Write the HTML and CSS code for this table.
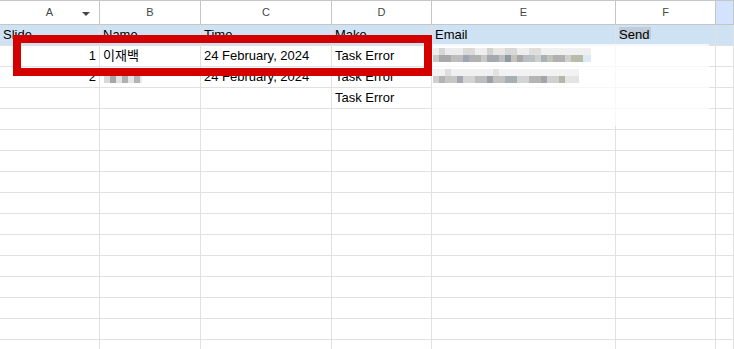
FILE: index.html
```html
<!DOCTYPE html>
<html lang="ko">
<head>
  <meta charset="UTF-8">
  <title>Slides sheet</title>
  <link rel="stylesheet" href="styles.css">
</head>
<body>

<div class="sheet">
  <!-- column letters -->
  <div class="row col-head">
    <div class="cell">A<span class="filter"></span></div>
    <div class="cell">B</div>
    <div class="cell">C</div>
    <div class="cell">D</div>
    <div class="cell">E</div>
    <div class="cell">F</div>
    <div class="cell sel"></div>
  </div>

  <!-- header row -->
  <div class="row title-row">
    <div class="cell"><span class="clip">Slide</span></div>
    <div class="cell"><span class="clip">Name</span></div>
    <div class="cell"><span class="clip">Time</span></div>
    <div class="cell"><span class="clip">Make</span></div>
    <div class="cell"><span class="clip">Email</span></div>
    <div class="cell"><span class="clip"><span class="hl">Send</span></span></div>
    <div class="cell"></div>
  </div>

  <div class="row">
    <div class="cell num">1</div>
    <div class="cell">이재백</div>
    <div class="cell">24 February, 2024</div>
    <div class="cell">Task Error</div>
    <div class="cell"></div>
    <div class="cell"></div>
    <div class="cell"></div>
  </div>
  <div class="row">
    <div class="cell num">2</div>
    <div class="cell"></div>
    <div class="cell">24 February, 2024</div>
    <div class="cell">Task Error</div>
    <div class="cell"></div>
    <div class="cell"></div>
    <div class="cell"></div>
  </div>
  <div class="row">
    <div class="cell"></div>
    <div class="cell"></div>
    <div class="cell"></div>
    <div class="cell">Task Error</div>
    <div class="cell"></div>
    <div class="cell"></div>
    <div class="cell"></div>
  </div>
  <div id="emptyRows"></div>

  <!-- hidden personal data -->
  <div class="haze"></div>
  <div class="mask mask-mail1"></div>
  <div class="mask mask-mail2"></div>
  <div class="mask mask-name"></div>

  <div class="marker"></div>
</div>

<script>
  // pad the sheet with blank rows
  const holder = document.getElementById('emptyRows');
  for (let i = 0; i < 12; i++) {
    const row = document.createElement('div');
    row.className = 'row';
    for (let c = 0; c < 7; c++) {
      const cell = document.createElement('div');
      cell.className = 'cell';
      row.appendChild(cell);
    }
    holder.appendChild(row);
  }
</script>

</body>
</html>
```

FILE: styles.css
```css
body {
  margin: 0;
  background: #fff;
  font-family: "Liberation Sans", Arial, "Noto Sans CJK KR", sans-serif;
  font-size: 13px;
  color: #000;
  overflow: hidden;
}
.sheet {
  position: relative;
  width: 734px;
}
.row {
  display: grid;
  grid-template-columns: 100px 101px 131px 100px 184px 100px 1fr;
  height: 21px;
}
.cell {
  box-sizing: border-box;
  border-right: 1px solid #e1e1e1;
  border-bottom: 1px solid #e1e1e1;
  padding: 0 3px;
  line-height: 20px;
  white-space: nowrap;
  overflow: hidden;
}
.num {
  text-align: right;
}

/* column letters */
.col-head {
  height: 25px;
}
.col-head .cell {
  position: relative;
  border-top: 1px solid #c4c7c5;
  border-right-color: #c4c7c5;
  border-bottom-color: #c4c7c5;
  text-align: center;
  font-size: 11px;
  line-height: 23px;
  color: #444746;
}
.col-head .sel {
  background: #d3e3fd;
}
.filter {
  position: absolute;
  left: 82px;
  top: 11px;
  border-left: 4px solid transparent;
  border-right: 4px solid transparent;
  border-top: 4px solid #444746;
}

/* first row of the table */
.title-row .cell {
  background: #cfe2f3;
}
.clip {
  display: block;
  height: 14px;
  overflow: hidden;
}
.hl {
  background: #bfcbd8;
  padding-right: 2px;
}

.haze {
  position: absolute;
  left: 432px;
  top: 44px;
  width: 277px;
  height: 82px;
  background: rgba(255, 255, 255, 0.72);
}
.mask {
  position: absolute;
}
.mask-mail1 {
  left: 433px;
  top: 48px;
  width: 158px;
  height: 14px;
  background:
    linear-gradient(to right, #eeeeee 0 6px, #d6d6d6 6px 12px, #ececec 12px 30px, #dadada 30px 42px, #eeeeee 42px 54px, #d2d2d2 54px 60px, #e6e6e6 60px 72px, #d8d8d8 72px 84px, #eeeeee 84px 96px, #dedede 96px 108px, #f0f0f0 108px 158px) top / 100% 7px no-repeat,
    linear-gradient(to right, #c9c9c9 0 6px, #a9a9a9 6px 18px, #bdbdbd 18px 30px, #9ca6b4 30px 36px, #b2b2b2 36px 48px, #c8c8c8 48px 54px, #a3a9af 54px 66px, #bdbdbd 66px 72px, #8f99a2 72px 78px, #c7c3b8 78px 84px, #a8a8a8 84px 90px, #b8c0c4 90px 102px, #cfcfcf 102px 108px, #a9b1b8 108px 114px, #c0c4b2 114px 120px, #b1b1b1 120px 132px, #cfcfcf 132px 138px, #b8bcaa 138px 150px, #dde8f5 150px 158px) bottom / 100% 7px no-repeat;
}
.mask-mail2 {
  left: 433px;
  top: 69px;
  width: 146px;
  height: 14px;
  background:
    linear-gradient(to right, #f2f2f2 0 12px, #dedede 12px 18px, #f0f0f0 18px 60px, #e2e2e2 60px 66px, #f2f2f2 66px 146px) top / 100% 7px no-repeat,
    linear-gradient(to right, #cfcfcf 0 6px, #b4b4b4 6px 12px, #c6c6c6 12px 24px, #a4a8ae 24px 30px, #d3d3d3 30px 42px, #bdbdbd 42px 54px, #9aa0a6 54px 60px, #c2c2c2 60px 72px, #a9aeb3 72px 84px, #d4d4d4 84px 96px, #b5b5b5 96px 108px, #a1a6ab 108px 114px, #d0d0d0 114px 126px, #b3b7a8 126px 132px, #e4e4e4 132px 146px) bottom / 100% 7px no-repeat;
}
.mask-name {
  left: 104px;
  top: 75px;
  width: 38px;
  height: 8px;
  background: linear-gradient(to right, #d8d8d8 0 6px, #a6a6a6 6px 12px, #e2e2e2 12px 18px, #b0b0b0 18px 24px, #e6e6e6 24px 30px, #b4b4b4 30px 36px, #e8e8e8 36px 38px);
}

/* red frame over the first entry */
.marker {
  position: absolute;
  left: 13px;
  top: 35px;
  width: 419px;
  height: 41px;
  box-sizing: border-box;
  border: 8px solid #d40000;
}
```
